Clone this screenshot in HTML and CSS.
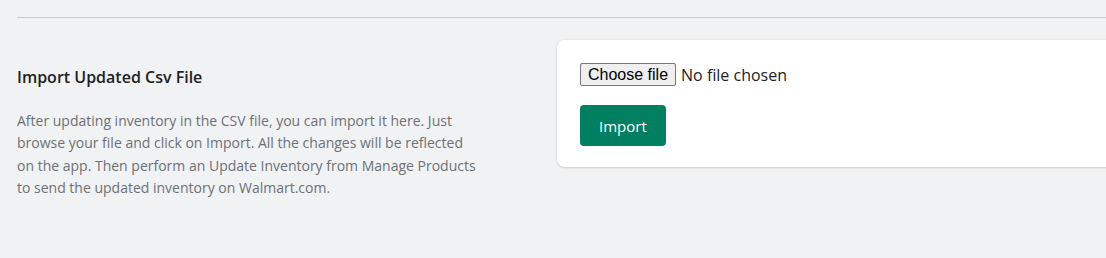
FILE: index.html
```html
<!DOCTYPE html>
<html lang="en">
<head>
    <meta charset="UTF-8">
    <meta name="viewport" content="width=device-width, initial-scale=1.0">
    <title>Import Inventory</title>
    <link rel="stylesheet" href="styles.css">
</head>
<body>
    <div class="page">
        <hr class="divider">

        <div class="section">
            <div class="annotation">
                <h2>Import Updated Csv File</h2>
                <p>After updating inventory in the CSV file, you can import it here. Just<br>
                browse your file and click on Import. All the changes will be reflected<br>
                on the app. Then perform an Update Inventory from Manage Products<br>
                to send the updated inventory on Walmart.com.</p>
            </div>
            <div class="card">
                <label class="file-picker">
                    <input type="file" class="file-input">
                    <span class="file-btn">Choose file</span>
                    <span class="file-name">No file chosen</span>
                </label>
                <button class="btn-primary">Import</button>
            </div>
        </div>
    </div>
</body>
</html>
```

FILE: styles.css
```css
* {
    margin: 0;
    padding: 0;
    box-sizing: border-box;
    font-family: "Open Sans", "Noto Sans", sans-serif;
}

html, body {
    background-color: #f1f2f4;
    overflow: hidden;
}

.page {
    width: 1600px;
    padding: 17px 0 0 17px;
}

.divider {
    border: none;
    border-top: 1px solid #c9cacc;
}

/* Annotated section */
.section {
    display: grid;
    grid-template-columns: 500px 1fr;
    gap: 40px;
    align-items: start;
    margin-top: 22px;
}

.annotation {
    padding-top: 25px;
}

.annotation h2 {
    font-size: 16px;
    font-weight: 600;
    color: #202223;
    line-height: 24px;
    margin-bottom: 21px;
}

.annotation p {
    font-size: 14px;
    line-height: 22.4px;
    color: #6d7175;
}

/* Card */
.card {
    background-color: #fff;
    border-radius: 8px;
    box-shadow: 0 0 3px rgba(0,0,0,0.08), 0 1px 2px rgba(0,0,0,0.12);
    padding: 23px 23px 21px 23px;
    display: flex;
    flex-direction: column;
    align-items: flex-start;
    gap: 19px;
}

/* File picker */
.file-picker {
    display: flex;
    align-items: center;
    gap: 5px;
    cursor: pointer;
}

.file-input {
    display: none;
}

.file-btn {
    font-family: "Liberation Sans", Arial, sans-serif;
    font-size: 16px;
    line-height: 19px;
    padding: 1px 7px;
    border: 1px solid #767676;
    border-radius: 2px;
    background-color: #efefef;
    color: #000;
}

.file-name {
    font-size: 16px;
    color: #202223;
}

.btn-primary {
    background-color: #008060;
    color: #fff;
    border: none;
    border-radius: 4px;
    font-size: 15px;
    padding: 0 19px;
    height: 41px;
    cursor: pointer;
}
```
